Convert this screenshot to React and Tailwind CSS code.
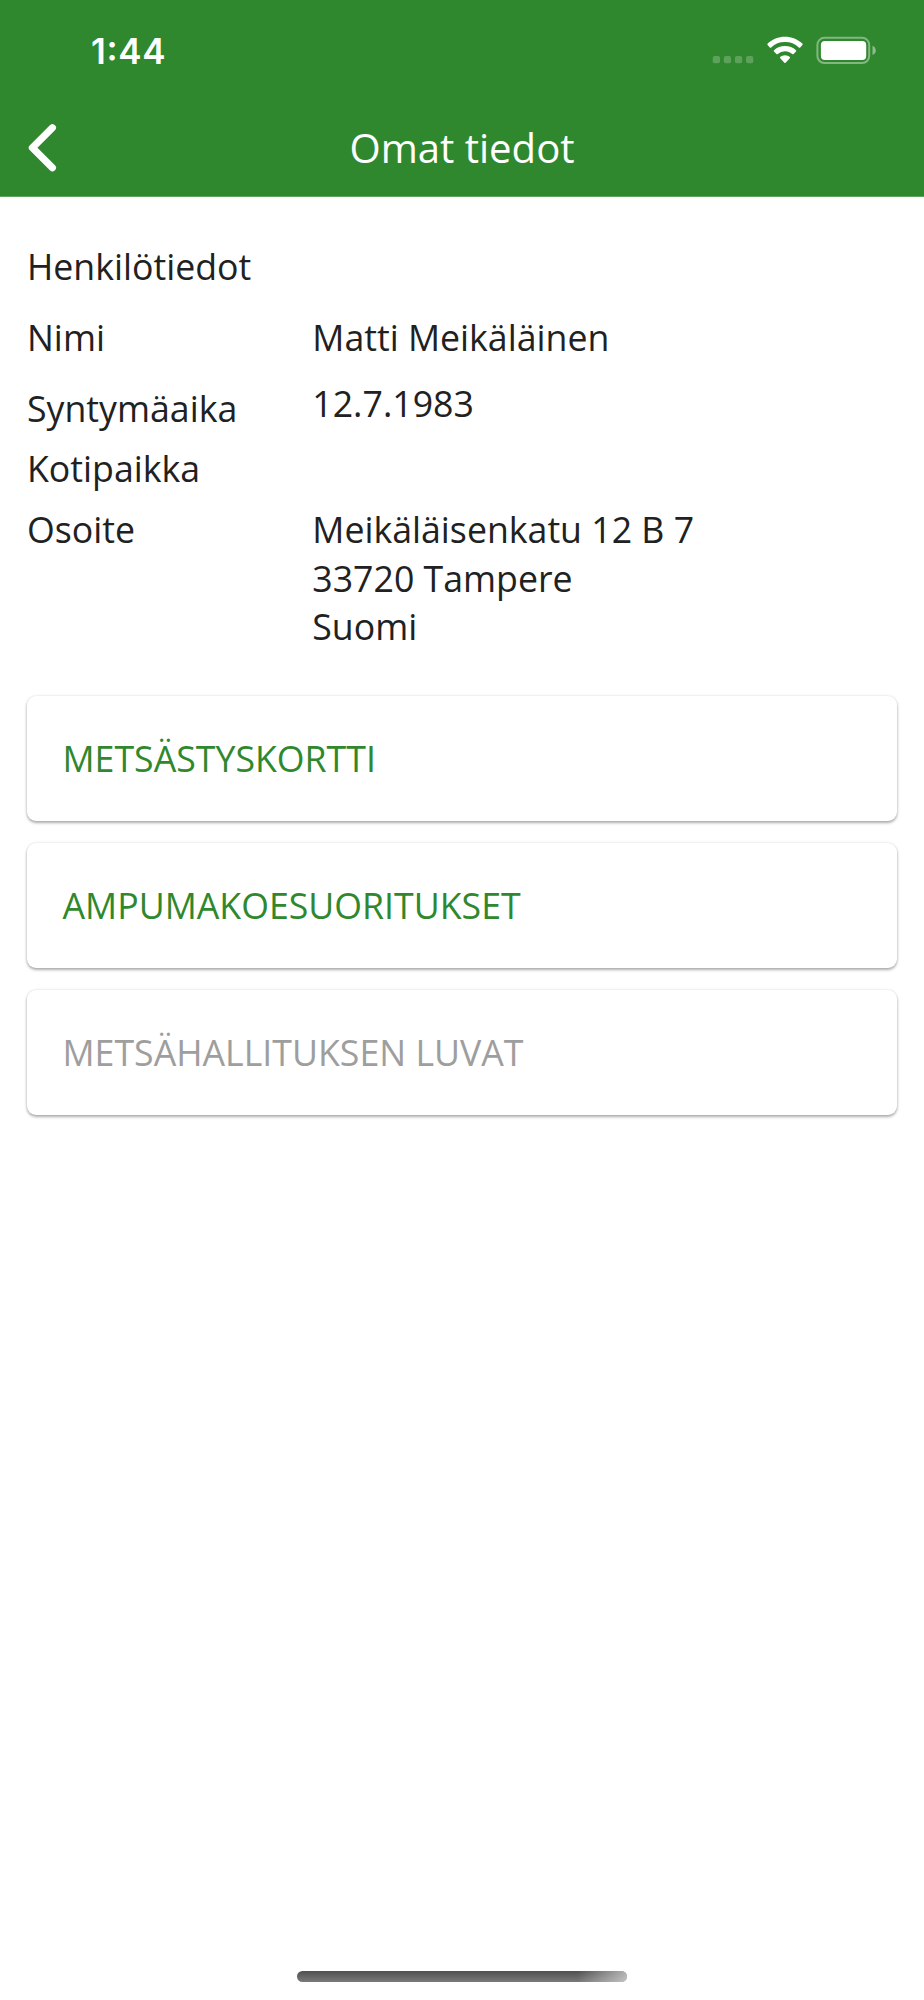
// src/App.jsx

import React from 'react';

// Rows of the personal details list
const details = [
  { label: 'Nimi', lines: ['Matti Meikäläinen'], row: 'h-[69px]', value: '' },
  { label: 'Syntymäaika', lines: ['12.7.1983'], row: 'h-[60px] mt-[2px]', value: '-mt-[5px]' },
  { label: 'Kotipaikka', lines: [], row: 'h-[60.5px]', value: '' },
  { label: 'Osoite', lines: ['Meikäläisenkatu 12 B 7', '33720 Tampere', 'Suomi'], row: '', value: 'pt-[0.5px]' },
];

const links = [
  { title: 'METSÄSTYSKORTTI', enabled: true },
  { title: 'AMPUMAKOESUORITUKSET', enabled: true },
  { title: 'METSÄHALLITUKSEN LUVAT', enabled: false },
];

const StatusBar = () => (
  <div className="flex h-[100px] items-start justify-between pl-[91px] pr-[47px] pt-[28px]">
    <span className="pt-[1px] font-['Inter',sans-serif] text-[35px] leading-[44px] font-semibold tracking-[0.7px] [font-feature-settings:'case']">
      1:44
    </span>
    <div className="flex pt-[8px]">
      {/* No signal dots */}
      <svg className="h-[30px] w-[42px]" viewBox="0 0 42 30" fill="#fff" fillOpacity="0.22">
        <rect x="0.7" y="20" width="7.3" height="7.3" rx="2" />
        <rect x="11.8" y="20" width="7.3" height="7.3" rx="2" />
        <rect x="22.9" y="20" width="7.3" height="7.3" rx="2" />
        <rect x="34" y="20" width="7.3" height="7.3" rx="2" />
      </svg>
      {/* Wifi */}
      <svg className="ml-[12px] h-[30px] w-[38px]" viewBox="0 0 38 30" fill="#fff">
        <path d="M19 0.8c-6.6 0-12.7 2.5-17.3 6.8-.5.4-.5 1-.1 1.5l2.200 2.300c.4.4 1 .4 1.400 0A20 20 0 0 1 19 6.100a20 20 0 0 1 13.800 5.300c.4.4 1 .4 1.400 0l2.200-2.300c.4-.5.4-1.100-.1-1.500C31.700 3.300 25.600.8 19 .8z" />
        <path d="M19 10a16.400 16.400 0 0 0-11 4.200c-.4.4-.4 1 0 1.400l2.400 2.400c.4.4.9.4 1.300.1A11.300 11.300 0 0 1 19 15.200c2.800 0 5.300 1 7.300 2.900.4.3.9.3 1.300-.1l2.400-2.400c.4-.4.4-1 0-1.400A16.400 16.400 0 0 0 19 10z" />
        <path d="M19 19.300c-1.800 0-3.500.7-4.800 1.700-.4.300-.4.900 0 1.200l4.200 4.600c.4.4.9.4 1.200 0l4.200-4.600c.4-.3.4-.9 0-1.200-1.300-1-3-1.700-4.800-1.700z" />
      </svg>
      {/* Battery */}
      <svg className="ml-[11px] h-[30px] w-[62px]" viewBox="0 0 62 30" fill="none">
        <rect x="2.400" y="1.800" width="51.800" height="25.200" rx="7" stroke="#fff" strokeOpacity="0.4" strokeWidth="2" />
        <rect x="5.900" y="5" width="45.300" height="19" rx="4" fill="#fff" />
        <path d="M57.500 9.800c2 .8 3.300 2.600 3.300 4.600s-1.300 3.800-3.300 4.600z" fill="#fff" fillOpacity="0.45" />
      </svg>
    </div>
  </div>
);

const Header = () => (
  <header className="h-[197px] border-b border-[#5fa45f] bg-[#2f882d] text-white">
    <StatusBar />
    <div className="grid h-[96px] grid-cols-[100px_1fr_100px] items-center">
      <button type="button" className="pl-[28px]" aria-label="Takaisin">
        <svg className="h-[48px] w-[29px]" viewBox="0 0 29 48" fill="none" stroke="#fff" strokeWidth="7.2" strokeLinecap="round" strokeLinejoin="round">
          <path d="M24.400 3.800L4.400 23.800l20 20" />
        </svg>
      </button>
      <h1 className="text-center text-[40.1px] leading-[54px]">Omat tiedot</h1>
    </div>
  </header>
);

const LinkCard = ({ title, enabled }) => (
  <button
    type="button"
    disabled={!enabled}
    className={`flex h-[125px] items-center rounded-[9px] bg-white px-[35.5px] text-left shadow-[0_2px_3px_rgba(0,0,0,0.3),0_0_3px_rgba(0,0,0,0.12)] ${
      enabled ? 'text-[#2f882d]' : 'text-[#9e9e9e]'
    }`}
  >
    {title}
  </button>
);

const App = () => {
  return (
    <div className="flex h-[2000px] w-[924px] flex-col bg-white font-['Open_Sans',sans-serif] text-[35.7px] leading-[48.5px] text-[#212121]">
      <Header />

      <main className="flex-1 px-[27px] pt-[44.5px]">
        <h2 className="mb-[23px]">Henkilötiedot</h2>

        <dl>
          {details.map(({ label, lines, row, value }) => (
            <div key={label} className={`grid grid-cols-[285.3px_1fr] ${row}`}>
              <dt>{label}</dt>
              <dd className={value}>
                {lines.map((line) => (
                  <p key={line}>{line}</p>
                ))}
              </dd>
            </div>
          ))}
        </dl>

        <div className="mt-[45px] flex flex-col gap-[22.3px]">
          {links.map((link) => (
            <LinkCard key={link.title} {...link} />
          ))}
        </div>
      </main>

      {/* Home indicator */}
      <div className="flex justify-center pb-[18px]">
        <div className="h-[11px] w-[330px] overflow-hidden rounded-full bg-linear-to-b from-[#505050] to-[#7a7a7a]">
          <div className="h-full bg-linear-to-r from-transparent from-85% to-white/55" />
        </div>
      </div>
    </div>
  );
};

export default App;
